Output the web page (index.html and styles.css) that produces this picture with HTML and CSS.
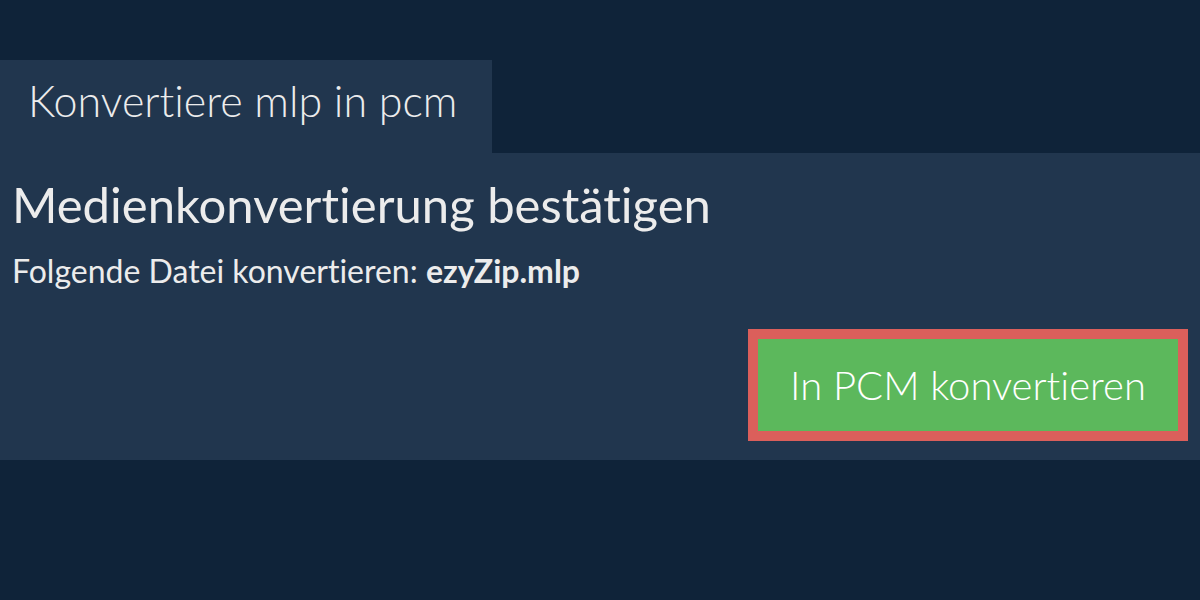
FILE: index.html
```html
<!DOCTYPE html>
<html lang="de">
<head>
    <meta charset="UTF-8">
    <meta name="viewport" content="width=device-width, initial-scale=1.0">
    <title>Konvertiere mlp in pcm</title>
    <link rel="stylesheet" href="styles.css">
</head>
<body>
    <div class="tab">Konvertiere mlp in pcm</div>
    <div class="panel">
        <h1 class="panel-title">Medienkonvertierung bestätigen</h1>
        <p class="panel-text">Folgende Datei konvertieren: <strong>ezyZip.mlp</strong></p>
        <div class="actions">
            <button class="convert-btn">In PCM konvertieren</button>
        </div>
    </div>
</body>
</html>
```

FILE: styles.css
```css
* {
    margin: 0;
    padding: 0;
    box-sizing: border-box;
    font-family: 'Lato', 'Noto Sans', sans-serif;
    font-variant-ligatures: none;
    font-feature-settings: "liga" 0, "dlig" 0;
}
body {
    background: #0f2339;
    color: #ececec;
    height: 100vh;
    overflow: hidden;
    padding-top: 60px;
}
.tab {
    display: inline-block;
    vertical-align: top;
    height: 93px;
    padding: 0 35px 0 28px;
    background: #21364e;
    font-size: 43px;
    font-weight: 300;
    line-height: 81px;
}
.panel {
    background: #21364e;
    height: 307px;
    padding: 22px 12px 19px 12px;
    display: flex;
    flex-direction: column;
}
.panel-title {
    font-size: 49px;
    font-weight: 400;
    line-height: 58px;
}
.panel-text {
    font-size: 32px;
    line-height: 40px;
    margin-top: 18px;
}
.panel-text strong {
    font-weight: 700;
}
.actions {
    margin-top: auto;
    display: flex;
    justify-content: flex-end;
}
.convert-btn {
    width: 440px;
    height: 112px;
    border: 10px solid #db5f5b;
    background: #5cb85c;
    color: #fff;
    font-size: 40px;
    font-weight: 300;
    cursor: pointer;
}
```
